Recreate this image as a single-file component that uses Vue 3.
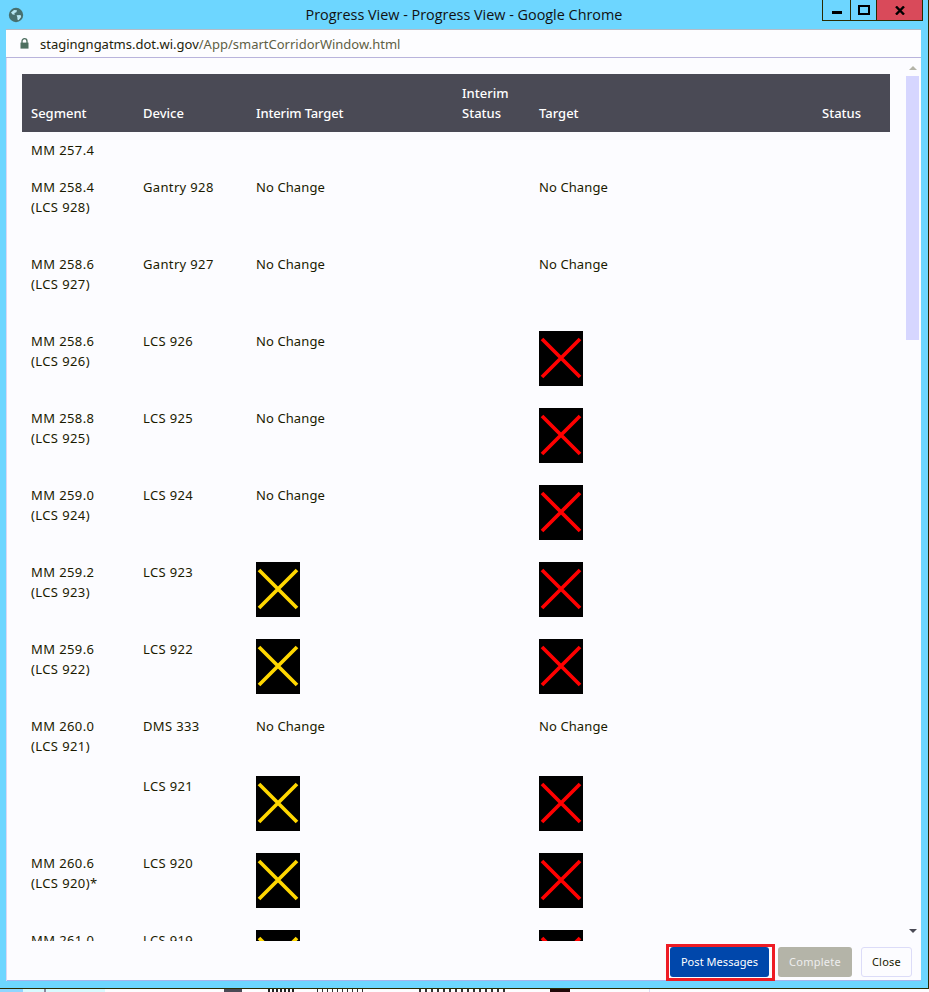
<script setup>
const rows = [
  { h: 'short', seg: ['MM 257.4'], dev: '', it: '', t: '' },
  { h: 'tall', seg: ['MM 258.4', '(LCS 928)'], dev: 'Gantry 928', it: 'No Change', t: 'No Change' },
  { h: 'tall', seg: ['MM 258.6', '(LCS 927)'], dev: 'Gantry 927', it: 'No Change', t: 'No Change' },
  { h: 'tall', seg: ['MM 258.6', '(LCS 926)'], dev: 'LCS 926', it: 'No Change', t: 'red' },
  { h: 'tall', seg: ['MM 258.8', '(LCS 925)'], dev: 'LCS 925', it: 'No Change', t: 'red' },
  { h: 'tall', seg: ['MM 259.0', '(LCS 924)'], dev: 'LCS 924', it: 'No Change', t: 'red' },
  { h: 'tall', seg: ['MM 259.2', '(LCS 923)'], dev: 'LCS 923', it: 'yellow', t: 'red' },
  { h: 'tall', seg: ['MM 259.6', '(LCS 922)'], dev: 'LCS 922', it: 'yellow', t: 'red' },
  { h: 'mid', seg: ['MM 260.0', '(LCS 921)'], dev: 'DMS 333', it: 'No Change', t: 'No Change' },
  { h: 'tall', seg: [], dev: 'LCS 921', it: 'yellow', t: 'red' },
  { h: 'tall', seg: ['MM 260.6', '(LCS 920)*'], dev: 'LCS 920', it: 'yellow', t: 'red' },
  { h: 'tall', seg: ['MM 261.0', '(LCS 919)'], dev: 'LCS 919', it: 'yellow', t: 'red' },
]
const signColor = { yellow: '#ffd700', red: '#ff0000' }
</script>

<template>
  <div class="page">
    <div class="window">
      <header class="titlebar">
        <svg class="globe" width="16" height="16" viewBox="0 0 16 16">
          <circle cx="8" cy="8" r="7.2" fill="#47706f" />
          <path d="M3 5.5 L6 3 L9 3.2 L8.4 5.2 L6.4 6 L6.8 7.8 L4.6 7.6 Z" fill="#b8e6f2" />
          <path d="M8.6 8.2 L12.6 8 L13.2 10 L10.6 13.2 L9.4 12.6 L9.4 10.4 Z" fill="#b8e6f2" />
        </svg>
        <div class="title">Progress View - Progress View - Google Chrome</div>
        <div class="controls">
          <div class="ctl ctl-min"><span class="min-bar"></span></div>
          <div class="ctl ctl-max"><span class="max-box"></span></div>
          <div class="ctl ctl-close">
            <svg width="10" height="9" viewBox="0 0 10 9">
              <path d="M1 .5 L9 8.5 M9 .5 L1 8.5" stroke="#000" stroke-width="2.4" fill="none" />
            </svg>
          </div>
        </div>
      </header>

      <div class="addressbar">
        <svg class="lock" width="9" height="11" viewBox="0 0 9 11">
          <path d="M2 5 V3.2 a2.5 2.5 0 0 1 5 0 V5" fill="none" stroke="#4d6f60" stroke-width="1.3" />
          <rect x="0.5" y="4.6" width="8" height="6" fill="#4d6f60" />
        </svg>
        <span class="host">stagingngatms.dot.wi.gov</span><span class="path">/App/smartCorridorWindow.html</span>
      </div>

      <main class="panel">
        <div class="content">
          <div class="viewport">
            <table class="grid">
              <colgroup>
                <col class="c1" /><col class="c2" /><col class="c3" /><col class="c4" /><col class="c5" /><col class="c6" />
              </colgroup>
              <thead>
                <tr>
                  <th>Segment</th>
                  <th>Device</th>
                  <th class="th-tight">Interim Target</th>
                  <th>Interim Status</th>
                  <th>Target</th>
                  <th>Status</th>
                </tr>
              </thead>
              <tbody>
                <tr v-for="(r, i) in rows" :key="i" :class="r.h">
                  <td class="seg"><div v-for="s in r.seg" :key="s">{{ s }}</div></td>
                  <td class="dev">{{ r.dev }}</td>
                  <td class="val">
                    <svg v-if="signColor[r.it]" class="sign" width="44" height="55" viewBox="0 0 44 55">
                      <rect width="44" height="55" fill="#000" />
                      <path d="M3 8 L41 46 M41 8 L3 46" :stroke="signColor[r.it]" stroke-width="3.7" fill="none" />
                    </svg>
                    <template v-else>{{ r.it }}</template>
                  </td>
                  <td></td>
                  <td class="val">
                    <svg v-if="signColor[r.t]" class="sign" width="44" height="55" viewBox="0 0 44 55">
                      <rect width="44" height="55" fill="#000" />
                      <path d="M3 8 L41 46 M41 8 L3 46" :stroke="signColor[r.t]" stroke-width="3.7" fill="none" />
                    </svg>
                    <template v-else>{{ r.t }}</template>
                  </td>
                  <td></td>
                </tr>
              </tbody>
            </table>
          </div>
          <div class="scrollbar">
            <span class="arrow up"></span>
            <div class="track"><div class="thumb"></div></div>
            <span class="arrow down"></span>
          </div>
        </div>
        <footer class="actions">
          <div class="highlight"><button class="btn primary">Post Messages</button></div>
          <button class="btn disabled">Complete</button>
          <button class="btn plain">Close</button>
        </footer>
      </main>
    </div>

    <div class="desktop">
      <span class="d d1"></span>
      <span class="d d2"><i></i></span>
      <span class="d d3"></span>
      <span class="d d4"></span>
      <span class="d d5"></span>
      <span class="d d6"></span>
      <span class="d d7"></span>
      <span class="d d8"></span>
      <span class="d d9"></span>
      <span class="d d10"></span>
      <span class="d d11"></span>
      <span class="d d12"></span>
      <span class="d d13"></span>
    </div>
  </div>
</template>

<style>
html, body { margin: 0; padding: 0; overflow: hidden; background: #fff; }
</style>

<style scoped>
.page {
  width: 929px;
  height: 992px;
  display: flex;
  flex-direction: column;
  overflow: hidden;
  font-family: "Noto Sans", "Open Sans", sans-serif;
  font-size: 13px;
  color: #1a1a00;
}
.window {
  box-sizing: border-box;
  height: 989px;
  display: flex;
  flex-direction: column;
  background: #6dd6ff;
  border-right: 1px solid #2b2b00;
  border-bottom: 1px solid #2b2b00;
  padding-bottom: 7px;
}
.titlebar {
  height: 29px;
  flex: none;
  display: grid;
  grid-template-columns: 1fr auto 1fr;
  align-items: start;
}
.globe { margin: 7px 0 0 8px; }
.title {
  font-family: "Open Sans", sans-serif;
  font-size: 14.4px;
  line-height: 30px;
  color: #111;
}
.controls {
  justify-self: end;
  display: flex;
  height: 21px;
  box-sizing: border-box;
  margin-right: 5px;
  border: 1px solid #2b2b00;
  border-top: 0;
}
.ctl { display: flex; align-items: center; justify-content: center; }
.ctl-min { width: 27px; border-right: 1px solid #2b2b00; }
.ctl-max { width: 25px; border-right: 1px solid #2b2b00; }
.ctl-close { width: 45px; background: #d94a5a; }
.min-bar { width: 10px; height: 3px; background: #000; margin-top: 5px; }
.max-box { box-sizing: content-box; width: 6px; height: 4px; border: 2px solid #000; padding: 1px; }
.addressbar {
  height: 29px;
  flex: none;
  box-sizing: border-box;
  margin: 0 7px 0 6px;
  background: #fdfdff;
  border-top: 1px solid #b4bcc8;
  border-bottom: 1px solid #b9b4dc;
  display: flex;
  align-items: center;
  padding-left: 14px;
  font-size: 13px;
}
.lock { margin-right: 11px; }
.host { color: #22220a; }
.path { color: #5f5f45; }
.panel {
  flex: 1;
  min-height: 0;
  margin: 0 7px 0 6px;
  background: #fcfcff;
  display: flex;
  flex-direction: column;
  box-shadow: inset 1px 0 0 #d8d8f4, inset 0 -1px 0 #a8b4ee;
}
.content { flex: 1; min-height: 0; display: flex; }
.viewport {
  flex: 1;
  min-width: 0;
  padding: 16px 0 0 16px;
  overflow: hidden;
}
.grid {
  width: 868px;
  table-layout: fixed;
  border-collapse: collapse;
  line-height: 20px;
}
.c1 { width: 112px; }
.c2 { width: 113px; }
.c3 { width: 206px; }
.c4 { width: 77px; }
.c5 { width: 283px; }
.c6 { width: 77px; }
th {
  box-sizing: border-box;
  height: 58px;
  background: #4a4a55;
  color: #fff;
  font-weight: 500;
  text-align: left;
  vertical-align: bottom;
  padding: 0 9px 9px;
}
.th-tight { letter-spacing: -0.15px; }
td {
  box-sizing: border-box;
  vertical-align: top;
  padding: 9px 9px 0;
}
.seg { letter-spacing: 0.4px; }
.dev { letter-spacing: 0.35px; }
.val { letter-spacing: 0.1px; }
.short td { height: 36px; padding-top: 8px; }
.mid td { height: 60px; }
.tall td { height: 77px; }
.sign { display: block; }
.scrollbar {
  width: 16px;
  flex: none;
  display: flex;
  flex-direction: column;
  align-items: center;
  padding: 8px 0;
  box-sizing: border-box;
}
.arrow { width: 0; height: 0; border-left: 4px solid transparent; border-right: 4px solid transparent; flex: none; }
.up { border-bottom: 4px solid #b4b4a8; }
.down { border-top: 4px solid #4a4a55; }
.track { flex: 1; width: 14px; padding-top: 6px; }
.thumb { width: 13px; height: 264px; background: #d6d6ff; }
.actions {
  height: 40px;
  flex: none;
  display: flex;
  justify-content: flex-end;
  align-items: flex-start;
  padding: 3px 9px 0 0;
  box-sizing: border-box;
}
.highlight {
  box-sizing: border-box;
  width: 109px;
  height: 37px;
  border: 3px solid #ee1c25;
  padding-left: 1px;
  margin-right: 3px;
}
.btn {
  display: block;
  height: 30px;
  box-sizing: border-box;
  font-family: "Noto Sans", "Open Sans", sans-serif;
  font-size: 11px;
  letter-spacing: 0.25px;
  border-radius: 3px;
  padding: 0 0 2px;
  border: 1px solid transparent;
}
.primary {
  width: 99px;
  letter-spacing: 0.05px;
  background: #0047ab;
  color: #fff;
}
.disabled {
  width: 74px;
  margin: 3px 9px 0 0;
  background: #b4b4a8;
  color: #eeeeee;
}
.plain {
  width: 51px;
  margin-top: 3px;
  background: #fcfcff;
  border-color: #dcdcf8;
  color: #1a1a00;
}
.desktop {
  height: 3px;
  flex: none;
  display: flex;
  background: #fdfdff;
}
.d { display: block; height: 3px; flex: none; }
.d1 { width: 23px; background: #8fd6ff; }
.d2 { width: 82px; background: #d8fbff; position: relative; }
.d2 i { position: absolute; left: 21px; top: 0; width: 2px; height: 3px; background: #8a8aa0; }
.d3 { width: 119px; }
.d4 { width: 18px; background: #4a4a55; }
.d5 { width: 26px; }
.d6 { width: 28px; background: repeating-linear-gradient(90deg, #222 0 2px, #fff 2px 4px); }
.d7 { width: 21px; }
.d8 { width: 50px; background: repeating-linear-gradient(90deg, #333 0 1px, #fff 1px 5px); }
.d9 { width: 52px; }
.d10 { width: 90px; background: repeating-linear-gradient(90deg, #333 0 2px, #fff 2px 6px); }
.d11 { width: 41px; }
.d12 { width: 20px; background: #200808; }
.d13 { width: 79px; border-right: 1px solid #dcdcf8; }
</style>
